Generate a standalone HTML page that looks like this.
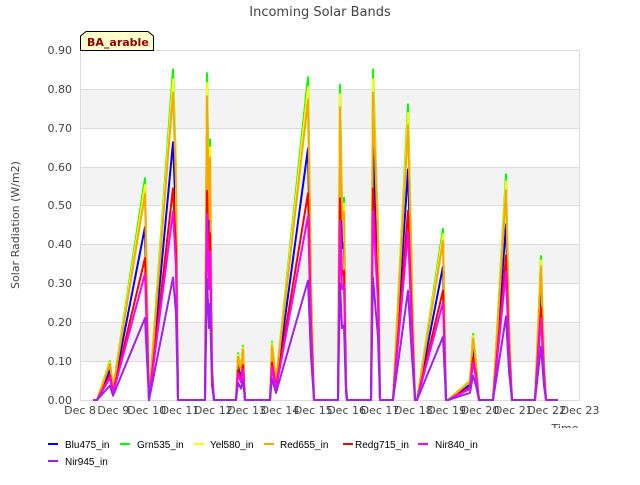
<!DOCTYPE html>
<html><head><meta charset="utf-8"><style>
body{margin:0;background:#fff;width:640px;height:480px;overflow:hidden;font-family:"Liberation Sans","DejaVu Sans",sans-serif}
</style></head><body>
<svg id="s" width="640" height="480" xmlns="http://www.w3.org/2000/svg" font-family="DejaVu Sans, Liberation Sans, sans-serif">
<rect x="80" y="50" width="500" height="350" fill="#fff"/>
<rect x="80" y="89" width="500" height="39" fill="#f3f3f3"/>
<rect x="80" y="167" width="500" height="39" fill="#f3f3f3"/>
<rect x="80" y="244" width="500" height="39" fill="#f3f3f3"/>
<rect x="80" y="322" width="500" height="39" fill="#f3f3f3"/>
<g stroke="#dcdcdc" stroke-width="1">
<line x1="80" y1="50.5" x2="580" y2="50.5"/><line x1="80" y1="89.5" x2="580" y2="89.5"/><line x1="80" y1="128.5" x2="580" y2="128.5"/><line x1="80" y1="167.5" x2="580" y2="167.5"/><line x1="80" y1="205.5" x2="580" y2="205.5"/><line x1="80" y1="244.5" x2="580" y2="244.5"/><line x1="80" y1="283.5" x2="580" y2="283.5"/><line x1="80" y1="322.5" x2="580" y2="322.5"/><line x1="80" y1="361.5" x2="580" y2="361.5"/>
<line x1="80.5" y1="50" x2="80.5" y2="400"/><line x1="579.5" y1="50" x2="579.5" y2="400"/><line x1="80" y1="400.5" x2="580" y2="400.5"/>
</g>
<g id="lines" fill="none" stroke-width="2" stroke-linejoin="round"></g>
<g font-size="11" fill="#444" text-anchor="end">
<text x="72" y="54">0.90</text><text x="72" y="93">0.80</text><text x="72" y="132">0.70</text><text x="72" y="171">0.60</text><text x="72" y="209">0.50</text><text x="72" y="248">0.40</text><text x="72" y="287">0.30</text><text x="72" y="326">0.20</text><text x="72" y="365">0.10</text><text x="72" y="404">0.00</text>
</g>
<g font-size="11" fill="#444" text-anchor="middle" id="xt"></g>
<text x="320" y="16" font-size="13" fill="#444" text-anchor="middle">Incoming Solar Bands</text>
<text x="19" y="225" font-size="11" fill="#444" text-anchor="middle" transform="rotate(-90 19 225)">Solar Radiation (W/m2)</text>
<text x="565" y="432" font-size="11" fill="#444" text-anchor="middle">Time</text>
<rect x="0" y="428" width="640" height="6" fill="#fff"/>
<path d="M80.5,50.5 L80.5,36 L86,31.5 L148,31.5 L153.5,36 L153.5,50.5 Z" fill="#ffffcc" stroke="#000"/>
<text x="87" y="46" font-size="11" font-weight="bold" fill="#8b0000">BA_arable</text>
<g font-size="10" fill="#000" font-family="Liberation Sans, sans-serif">
<line x1="48" y1="444" x2="58" y2="444" stroke="#0000ff" stroke-width="2"/><text x="65" y="448">Blu475_in</text>
<line x1="120" y1="444" x2="130" y2="444" stroke="#00ff00" stroke-width="2"/><text x="137" y="448">Grn535_in</text>
<line x1="194" y1="444" x2="204" y2="444" stroke="#ffff00" stroke-width="2"/><text x="210" y="448">Yel580_in</text>
<line x1="264" y1="444" x2="274" y2="444" stroke="#ffa500" stroke-width="2"/><text x="280" y="448">Red655_in</text>
<line x1="343" y1="444" x2="353" y2="444" stroke="#ff0000" stroke-width="2"/><text x="355" y="448">Redg715_in</text>
<line x1="418" y1="444" x2="428" y2="444" stroke="#ff00ff" stroke-width="2"/><text x="435" y="448">Nir840_in</text>
<line x1="48" y1="461" x2="58" y2="461" stroke="#a020f0" stroke-width="2"/><text x="65" y="465">Nir945_in</text>
</g>
</svg>
<script>
var g=[[93,0],[97,0],[110,0.10],[113,0.03],[145,0.57],[149,0],[173,0.85],[176,0.6],[178,0],[205,0],[207,0.84],[209,0.5],[210,0.67],[212,0.1],[214,0],[236,0],[238,0.12],[241,0.08],[243,0.14],[245,0],[270,0],[272,0.15],[276,0.05],[308,0.83],[311,0.3],[314,0],[338,0],[340,0.81],[342,0.5],[344,0.52],[346,0.05],[347,0],[371,0],[373,0.85],[376,0.6],[378,0.44],[380,0],[393,0],[408,0.76],[412,0.3],[415,0],[417,0],[443,0.44],[446,0],[448,0],[470,0.05],[473,0.17],[476,0.1],[479,0],[493,0],[506,0.58],[509,0.2],[512,0],[535,0],[541,0.37],[544,0.1],[546,0],[558,0]];
var S=[["#0000ff",0.78],["#00ff00",1],["#ffff00",0.97],["#ffa500",0.93],["#ff0000",0.64],["#ff00ff",0.57],["#a020f0",0.37]];
var L=document.getElementById('lines'),h='';
S.forEach(function(s){var p=g.map(function(q){return q[0]+','+(400-q[1]*s[1]*388.9).toFixed(1)}).join(' ');h+='<polyline stroke="'+s[0]+'" points="'+p+'"/>';});
L.innerHTML=h;
var x='';for(var d=0;d<=15;d++){x+='<text x="'+(80+d*33.33).toFixed(1)+'" y="414">Dec '+(8+d)+'</text>';}
document.getElementById('xt').innerHTML=x;
</script>
</body></html>
